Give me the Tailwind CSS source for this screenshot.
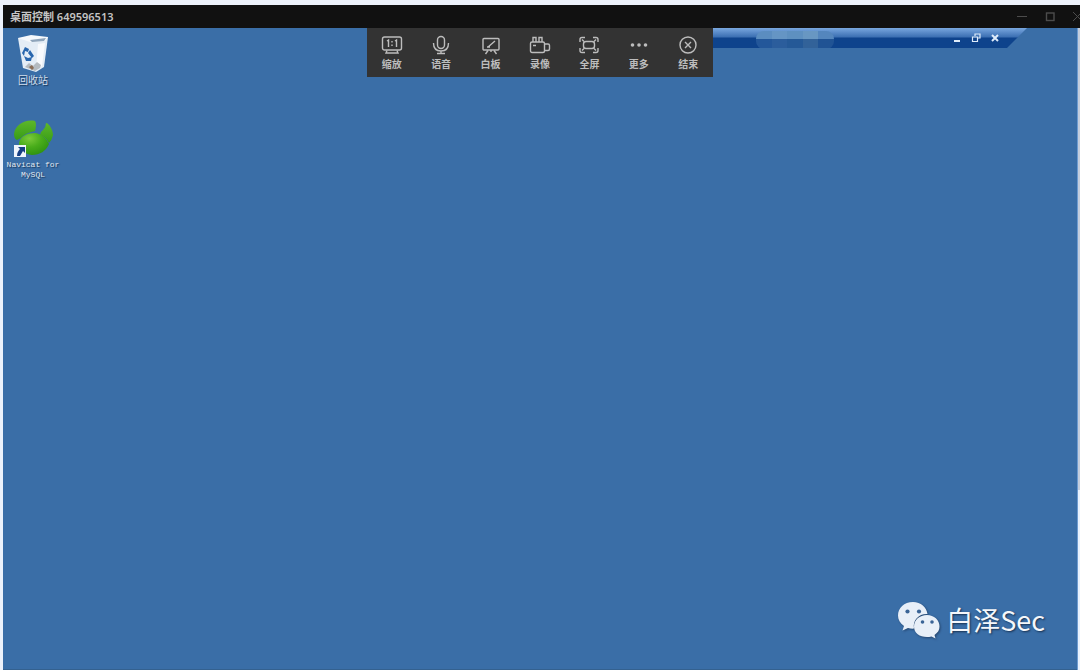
<!DOCTYPE html>
<html lang="zh-CN">
<head>
<meta charset="utf-8">
<meta name="viewport" content="width=device-width, initial-scale=1">
<title>桌面控制 649596513</title>
<script src="https://cdn.jsdelivr.net/npm/@tailwindcss/browser@4"></script>
</head>
<body class="flex h-screen flex-col overflow-hidden bg-[#edf2fb] pt-[5px] pl-[3px] font-['Noto_Sans','Noto_Sans_CJK_SC',sans-serif]">
  <header class="flex h-[23px] shrink-0 items-center justify-between overflow-hidden bg-[#111111] pl-[7px]">
    <h1 class="text-[11px] leading-4 font-semibold whitespace-nowrap text-[#c4c4c4]">桌面控制 649596513</h1>
    <div class="-mr-1 flex shrink-0 items-center gap-4 text-[#4c4c4c]">
      <button type="button" aria-label="最小化" class="size-3"><svg viewBox="0 0 12 12" class="size-3" fill="none" stroke="currentColor"><path d="M1 5.5h10"/></svg></button>
      <button type="button" aria-label="最大化" class="size-3"><svg viewBox="0 0 12 12" class="size-3" fill="none" stroke="currentColor" stroke-width="1.4"><rect x="2.5" y="2" width="7.5" height="7.5"/></svg></button>
      <button type="button" aria-label="关闭" class="size-3"><svg viewBox="0 0 12 12" class="size-3" fill="none" stroke="currentColor"><path d="M1 1l9 9M10 1l-9 9"/></svg></button>
    </div>
  </header>

  <div class="flex min-h-0 flex-1">
    <main class="relative flex-1 border-b border-[#34618f] bg-[#3a6ea7]">
      <!-- desktop shortcuts -->
      <div class="flex w-[60px] flex-col gap-[30px] pt-[5px]">
        <button type="button" class="flex flex-col items-center">
          <svg viewBox="0 0 34 40" class="h-10 w-[34px]">
            <path d="M2 5l30-1-4 30-8 5-13-4z" fill="#e4edf6"/>
            <path d="M2 5l13-3 17 2-3 4-15 1z" fill="#f6f9fc"/>
            <path d="M14 7l16-2-2 3-12 1z" fill="#8fa5bb"/>
            <path d="M22 11l7-1-3 23-6 4z" fill="#f8fafd"/>
            <path d="M9 34l4-4 4 3 4-4 4 3-1 3-5 3z" fill="#b4babf"/>
            <path d="M13 34l3-2 2 3-2 2z" fill="#8a6c55"/>
            <path d="M9 14l4 2-1 3-3-1-1 5-2-3zM14 17l4 6-2 2-4-5zM8 23l4 2 4-1-1 4-5 0z" fill="#2866ae"/>
          </svg>
          <span class="text-[10px] leading-[14px] text-[#d3dfec] [text-shadow:1px_1px_1px_#17375a]">回收站</span>
        </button>
        <button type="button" class="flex flex-col items-center">
          <svg viewBox="0 0 42 42" class="h-[42px] w-[42px]">
            <defs>
              <linearGradient id="leaf" x1="0" y1="0" x2="0" y2="1"><stop offset="0" stop-color="#5db62a"/><stop offset="1" stop-color="#379c16"/></linearGradient>
              <radialGradient id="body" cx=".35" cy=".25" r=".8"><stop offset="0" stop-color="#7bc93a"/><stop offset=".5" stop-color="#48ac1a"/><stop offset="1" stop-color="#2d9110"/></radialGradient>
            </defs>
            <path d="M23 4C13 2 3 8 2 17q0 5 3 6l4-2q4-5 14-7 2-7 0-10z" fill="url(#leaf)"/>
            <path d="M34 6c3 0 7 7 7 12q-1 5-4 8-3-6-9-8 0-3 3-5 3-3 3-7z" fill="url(#leaf)"/>
            <path d="M7 26c1-7 9-10 16-10 7 1 12 6 14 11-3 7-9 11-17 11-8-1-14-6-13-12z" fill="url(#body)"/>
            <rect x="2" y="28" width="12" height="12" fill="#f0f5fb"/>
            <path d="M6 30h7v6l-2-2-3 5H5c0-4 2-6 3-7z" fill="#173f83"/>
          </svg>
          <span class="mt-px font-['Liberation_Mono',monospace] text-[8px] leading-[10px] whitespace-nowrap text-[#e1e9f1] [text-shadow:1px_1px_1px_#17375a]">Navicat for<br>MySQL</span>
        </button>
      </div>

      <!-- remote connection bar, slanted at its right end -->
      <div class="absolute top-0 right-[50px] left-1/2 flex h-5 items-center justify-end bg-linear-to-b from-[#79a7df] from-0% via-[#3b6fb2] via-45% to-[#0e438c] to-50% pr-[27px] [clip-path:polygon(0_0,100%_0,calc(100%_-_20px)_100%,0_100%)]">
        <div class="mt-1 mr-[118px] flex h-[18px] w-[78px] overflow-hidden rounded-lg">
          <span class="flex-1 bg-linear-to-b from-[#5b8dc0] from-45% to-[#23579a] to-45%"></span>
          <span class="flex-1 bg-linear-to-b from-[#6595c4] from-45% to-[#2b5d9c] to-45%"></span>
          <span class="flex-1 bg-linear-to-b from-[#5e90c0] from-45% to-[#255997] to-45%"></span>
          <span class="flex-1 bg-linear-to-b from-[#6897c2] from-45% to-[#326299] to-45%"></span>
          <span class="flex-1 bg-linear-to-b from-[#5486bd] from-45% to-[#205394] to-45%"></span>
        </div>
        <div class="flex gap-[9px] text-[#deebfa]">
          <button type="button" aria-label="最小化连接" class="size-[10px]"><svg viewBox="0 0 10 10" class="size-[10px]"><path d="M2 7h6v2H2z" fill="currentColor"/></svg></button>
          <button type="button" aria-label="还原连接" class="size-[10px]"><svg viewBox="0 0 10 10" class="size-[10px]" fill="none" stroke="currentColor" stroke-width="1.2"><path d="M4 3V1h5v4H7M1.500 4h5v4.500h-5z"/></svg></button>
          <button type="button" aria-label="断开连接" class="size-[10px]"><svg viewBox="0 0 10 10" class="size-[10px]" fill="none" stroke="currentColor" stroke-width="2"><path d="M2 2l6 6M8 2l-6 6"/></svg></button>
        </div>
      </div>

      <!-- control toolbar -->
      <nav aria-label="远程控制" class="absolute top-0 left-1/2 flex h-[49px] w-[346px] -translate-x-1/2 bg-[#333333] pt-[7px] text-[10px] leading-[14px] font-bold text-[#bdbdbd]">
        <button type="button" class="flex flex-1 flex-col items-center gap-[2px]">
          <svg viewBox="0 0 22 20" class="h-5 w-[22px]" fill="none" stroke="currentColor" stroke-width="1.4"><rect x="1.500" y="2" width="19" height="13" rx="2"/><path d="M6 15.500l-1 2.500h12l-1-2.500M6 6l1.500-1v7M14 6l1.500-1v7M11 6v1.500M11 9.500V11"/></svg>
          <span>缩放</span>
        </button>
        <button type="button" class="flex flex-1 flex-col items-center gap-[2px]">
          <svg viewBox="0 0 22 20" class="h-5 w-[22px]" fill="none" stroke="currentColor" stroke-width="1.400"><rect x="7.500" y="1.500" width="7" height="12" rx="3.500"/><path d="M3.500 8c0 5.500 3 8 7.500 8s7.500-2.500 7.500-8M11 16v2.500M7 18.500h8"/></svg>
          <span>语音</span>
        </button>
        <button type="button" class="flex flex-1 flex-col items-center gap-[2px]">
          <svg viewBox="0 0 22 20" class="h-5 w-[22px]" fill="none" stroke="currentColor" stroke-width="1.400"><rect x="3" y="3.500" width="16" height="11.500" rx="1"/><path d="M8 12l7-6M7 12h3M11 15v2M8 15.500L5.500 19M14 15.500l2.500 3.500"/></svg>
          <span>白板</span>
        </button>
        <button type="button" class="flex flex-1 flex-col items-center gap-[2px]">
          <svg viewBox="0 0 22 20" class="h-5 w-[22px]" fill="none" stroke="currentColor" stroke-width="1.400"><rect x="1.500" y="7" width="14" height="10.500" rx="1.500"/><path d="M15.500 9h3.500q1.500 0 1.500 1.500V14q0 1.500-1.500 1.500h-3.500M4 7V2.500h3V7M10 7V2.500h3V7M4 10.500h3"/></svg>
          <span>录像</span>
        </button>
        <button type="button" class="flex flex-1 flex-col items-center gap-[2px]">
          <svg viewBox="0 0 22 20" class="h-5 w-[22px]" fill="none" stroke="currentColor" stroke-width="1.400"><path d="M2 7V4.500q0-2 2-2h3M15 2.500h3q2 0 2 2V7M20 13v2.500q0 2-2 2h-3M7 17.500H4q-2 0-2-2V13M4 4.500l2 2M18 4.500l-2 2M18 15.500l-2-2M4 15.500l2-2"/><rect x="5.500" y="6.500" width="11" height="7" rx="2.500"/></svg>
          <span>全屏</span>
        </button>
        <button type="button" class="flex flex-1 flex-col items-center gap-[2px]">
          <svg viewBox="0 0 22 20" class="h-5 w-[22px]" fill="currentColor"><circle cx="4.500" cy="10" r="1.800"/><circle cx="11" cy="10" r="1.800"/><circle cx="17.500" cy="10" r="1.800"/></svg>
          <span>更多</span>
        </button>
        <button type="button" class="flex flex-1 flex-col items-center gap-[2px]">
          <svg viewBox="0 0 22 20" class="h-5 w-[22px]" fill="none" stroke="currentColor" stroke-width="1.400"><circle cx="11" cy="10" r="8"/><path d="M8 7l6 6M14 7l-6 6"/></svg>
          <span>结束</span>
        </button>
      </nav>

      <!-- channel watermark -->
      <div class="absolute right-8 bottom-[30px] flex items-center gap-[5px]">
        <svg viewBox="0 0 44 38" class="h-[38px] w-11 drop-shadow-[1px_1px_1px_rgba(20,40,70,0.6)]">
          <path d="M16 1C7 1 1 7 1 14.500c0 4.500 2 7.500 6 10.500l-1.500 4.500 5.500-2.500c2 .5 4 .8 6 .6C15.500 19 22 12.500 30.500 13 29.500 6 24 1 16 1z" fill="#e8eff8"/>
          <path d="M30 14c-7.500 0-13 5-13 11.500S22.500 36 30 36c1.500 0 3-.2 4.500-.6l4 2.200-1-3.600c3.500-2.500 5-5 5-8.500C42.500 19 37 14 30 14z" fill="#e8eff8"/>
          <g fill="#3a6496"><circle cx="10.500" cy="10.500" r="2.100"/><circle cx="22" cy="10.500" r="2.100"/><circle cx="25.500" cy="21" r="1.800"/><circle cx="35" cy="21" r="1.800"/></g>
        </svg>
        <span class="font-['Noto_Sans_CJK_SC',sans-serif] text-[27px] leading-9 whitespace-nowrap text-[#f4f7fb] [text-shadow:1px_1px_2px_#17304f]">白泽Sec</span>
      </div>
    </main>

    <!-- edge of the window's scroll track -->
    <div aria-hidden="true" class="flex w-[3px] shrink-0 flex-col border-l border-[#6d9bd0] bg-[#eaf2fd]">
      <span class="h-[72%] bg-[#c5cedd]"></span>
    </div>
  </div>
</body>
</html>
